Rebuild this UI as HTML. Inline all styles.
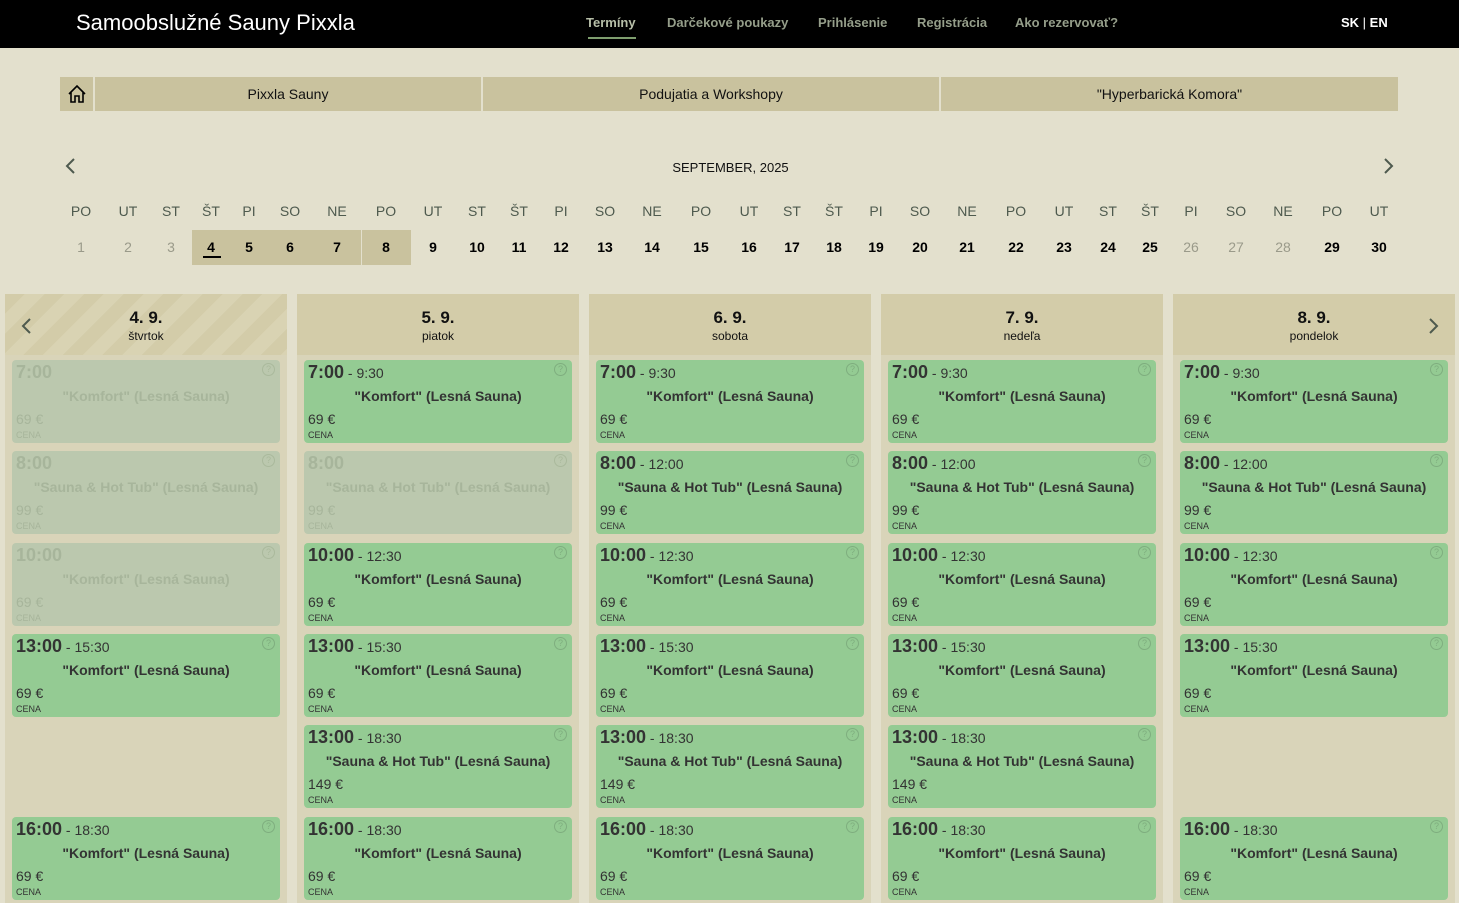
<!DOCTYPE html>
<html><head><meta charset="utf-8"><style>
*{box-sizing:border-box;margin:0;padding:0}
body{width:1459px;height:903px;overflow:hidden;background:#e3e0cd;font-family:"Liberation Sans",sans-serif;position:relative;color:#111}
.top{position:absolute;left:0;top:0;width:1459px;height:48px;background:#000}
.brand{position:absolute;left:76px;top:10px;color:#fff;font-size:22px}
.nav{position:absolute;top:15px;color:#959e8a;font-size:13px;font-weight:bold}
.a{position:absolute}
.tab{position:absolute;top:77px;height:34px;background:#c9c29e;font-size:14px;text-align:center;line-height:34px}
.dn{position:absolute;top:203px;width:40px;margin-left:-20px;text-align:center;font-size:14px;color:#4e5a4e}
.dd{position:absolute;top:239px;width:40px;margin-left:-20px;text-align:center;font-size:14px;font-weight:bold;color:#000}
.dd.g{font-weight:normal;color:#9a9a8a}
.col{position:absolute;top:294px;width:282px;height:609px;background:#d9d4b9}
.hd{height:61px;background:#d3cca9;text-align:center;padding-top:15px}
.hd b{font-size:17px;display:block;line-height:18px}
.hd span{font-size:12px}
.card{position:absolute;left:7px;width:268px;height:83px;background:#94cb93;border-radius:4px;color:#333}
.card .t{position:absolute;left:4px;top:2px;font-size:18px;font-weight:bold}
.card .t i{font-style:normal;font-weight:normal;font-size:14px}
.card .n{position:absolute;left:0;right:0;top:28px;text-align:center;font-size:14px;font-weight:bold}
.card .p{position:absolute;left:4px;top:51px;font-size:14px}
.card .c{position:absolute;left:4px;top:70px;font-size:9px}
.card .q{position:absolute;right:5px;top:3px;width:13px;height:13px;border:1px solid #7fae7f;border-radius:50%;font-size:9px;color:#7fae7f;text-align:center;line-height:11px}
.card.d{background:#bbc8ae;color:#a7b59b}
.card.d .q{border-color:#aab99c;color:#aab99c}
</style></head><body>
<div class="top"><div class="brand">Samoobslužné Sauny Pixxla</div>
<div class="nav" style="left:586px;color:#b7bfa8">Termíny</div>
<div class="a" style="left:588px;top:37px;width:48px;height:2px;background:#7e9e6e"></div>
<div class="nav" style="left:667px">Darčekové poukazy</div>
<div class="nav" style="left:818px">Prihlásenie</div>
<div class="nav" style="left:917px">Registrácia</div>
<div class="nav" style="left:1015px">Ako rezervovať?</div>
<div class="nav" style="left:1341px;color:#fff">SK <span style="font-weight:normal">|</span> EN</div>
</div>
<div class="tab" style="left:60px;width:33px"><svg width="20" height="20" viewBox="0 0 20 20" style="margin-top:7px"><path d="M2 10 L10 2 L18 10 M4 8 V18 H8 V12 H12 V18 H16 V8" fill="none" stroke="#000" stroke-width="1.6"/></svg></div>
<div class="tab" style="left:95px;width:386px">Pixxla Sauny</div>
<div class="tab" style="left:483px;width:456px">Podujatia a Workshopy</div>
<div class="tab" style="left:941px;width:457px">"Hyperbarická Komora"</div>
<svg class="a" style="left:64px;top:157px" width="12" height="18"><path d="M10 2 L3 9 L10 16" fill="none" stroke="#4e5a4e" stroke-width="2"/></svg>
<svg class="a" style="left:1383px;top:157px" width="12" height="18"><path d="M2 2 L9 9 L2 16" fill="none" stroke="#4e5a4e" stroke-width="2"/></svg>
<div class="a" style="left:0;width:1459px;top:160px;text-align:center;font-size:13px;padding-left:2px">SEPTEMBER, 2025</div>
<div class="a" style="left:192px;top:230px;width:169px;height:35px;background:#c9c29e"></div>
<div class="a" style="left:362px;top:230px;width:49px;height:35px;background:#c9c29e"></div>
<div class="a" style="left:203px;top:256px;width:18px;height:2px;background:#000"></div>
<div id="cal"></div>
<div id="cols"></div>
<script>
var xs=[81,128,171,211,249,290,337,386,433,477,519,561,605,652,701,749,792,834,876,920,967,1016,1064,1108,1150,1191,1236,1283,1332,1379];
var nm=["PO","UT","ST","ŠT","PI","SO","NE"];var h="";
for(var i=0;i<30;i++){h+='<div class="dn" style="left:'+xs[i]+'px">'+nm[i%7]+'</div>';
var g=(i<3||(i>=25&&i<=27))?' g':'';h+='<div class="dd'+g+'" style="left:'+xs[i]+'px">'+(i+1)+'</div>';}
document.getElementById('cal').innerHTML=h;
var tops=[360,451,543,634,725,817];
var K='"Komfort" (Lesná Sauna)',H='"Sauna &amp; Hot Tub" (Lesná Sauna)';
var S=[["7:00","9:30",K,"69"],["8:00","12:00",H,"99"],["10:00","12:30",K,"69"],["13:00","15:30",K,"69"],["13:00","18:30",H,"149"],["16:00","18:30",K,"69"]];
var cols=[["4. 9.","štvrtok",["d","d","d","a","","a"]],["5. 9.","piatok",["a","d","a","a","a","a"]],["6. 9.","sobota",["a","a","a","a","a","a"]],["7. 9.","nedeľa",["a","a","a","a","a","a"]],["8. 9.","pondelok",["a","a","a","a","","a"]]];
h="";
cols.forEach(function(c,ci){var x=5+ci*292;
var bg=ci==0?'background:repeating-linear-gradient(135deg,#d3cca9 0 14px,#d9d3b3 14px 28px)':'';
h+='<div class="col" style="left:'+x+'px"><div class="hd" style="'+bg+'"><b>'+c[0]+'</b><span>'+c[1]+'</span></div>';
c[2].forEach(function(s,si){if(!s)return;var d=S[si];
h+='<div class="card '+(s=="d"?"d":"")+'" style="top:'+(tops[si]-294)+'px"><div class="t">'+d[0]+(s=="d"?'':'<i> - '+d[1]+'</i>')+'</div><div class="q">?</div><div class="n">'+d[2]+'</div><div class="p">'+d[3]+' €</div><div class="c">CENA</div></div>';});
h+='</div>';});
h+='<svg class="a" style="left:20px;top:317px" width="12" height="18"><path d="M10 2 L3 9 L10 16" fill="none" stroke="#4e5a4e" stroke-width="2"/></svg>';
h+='<svg class="a" style="left:1428px;top:317px" width="12" height="18"><path d="M2 2 L9 9 L2 16" fill="none" stroke="#4e5a4e" stroke-width="2"/></svg>';
document.getElementById('cols').innerHTML=h;
</script>
</body></html>
